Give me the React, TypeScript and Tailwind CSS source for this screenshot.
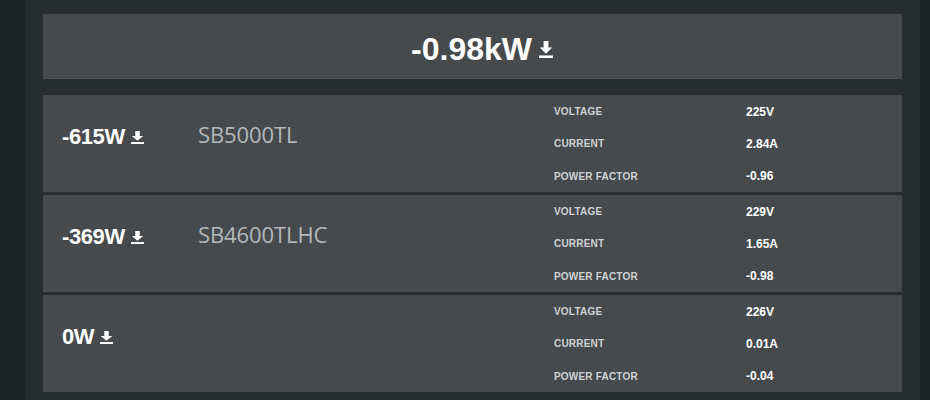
import React from "react"

type Meter = {
    power: string
    name?: string
    voltage: string
    current: string
    pf: string
}

const meters: Meter[] = [
    { power: "-615W", name: "SB5000TL", voltage: "225V", current: "2.84A", pf: "-0.96" },
    { power: "-369W", name: "SB4600TLHC", voltage: "229V", current: "1.65A", pf: "-0.98" },
    { power: "0W", voltage: "226V", current: "0.01A", pf: "-0.04" },
]

function DownloadIcon({ className }: { className?: string }) {
    return (
        <svg viewBox="0 0 14 16" preserveAspectRatio="none" className={className} fill="currentColor">
            <path d="M4.6 0h4.8v6h3.8L7 12 0.8 6h3.8z" />
            <rect x="0" y="13.6" width="14" height="2.4" />
        </svg>
    )
}

function StatRow({ label, value }: { label: string; value: string }) {
    return (
        <div className="flex h-[32.5px] items-center pt-[1px]">
            <div className="w-[192px] text-[10px] font-bold tracking-[0.2px] text-[#cfd1d2]">{label}</div>
            <div className="text-[12px] font-bold text-white">{value}</div>
        </div>
    )
}

export default function App() {
    return (
        <div className="flex h-[400px] w-[930px] overflow-hidden bg-[#1e2325] font-['Liberation_Sans',Arial,sans-serif]">
            <div className="ml-[25px] w-[895px] bg-[#272c2e] px-[18px] pt-[14px]">
                <div className="flex h-[65px] items-center justify-center border-b border-[#4e5356] bg-[#464a4d] pl-[19px] pt-[5px]">
                    <span className="text-[32px] font-bold text-white">-0.98kW</span>
                    <DownloadIcon className="ml-[7px] mt-[2px] h-[17px] w-[14px] text-white" />
                </div>
                <div className="mt-[16px] flex flex-col gap-[3px]">
                    {meters.map((m) => (
                        <div key={m.power} className="flex h-[97px] bg-[#464a4d]">
                            <div className="flex w-[511px] items-center pb-[14px] pl-[19px]">
                                <div className="flex w-[136px] items-center">
                                    <span className="text-[22px] font-bold tracking-[-0.4px] text-white">{m.power}</span>
                                    <DownloadIcon className="ml-[6px] mt-[1px] h-[13px] w-[13px] text-white" />
                                </div>
                                {m.name && (
                                    <span className="mb-[4px] font-['Open_Sans',sans-serif] text-[22px] tracking-[-0.1px] text-[#b5b8ba]">
                                        {m.name}
                                    </span>
                                )}
                            </div>
                            <div className="flex flex-col">
                                <StatRow label="VOLTAGE" value={m.voltage} />
                                <StatRow label="CURRENT" value={m.current} />
                                <StatRow label="POWER FACTOR" value={m.pf} />
                            </div>
                        </div>
                    ))}
                </div>
            </div>
        </div>
    )
}
